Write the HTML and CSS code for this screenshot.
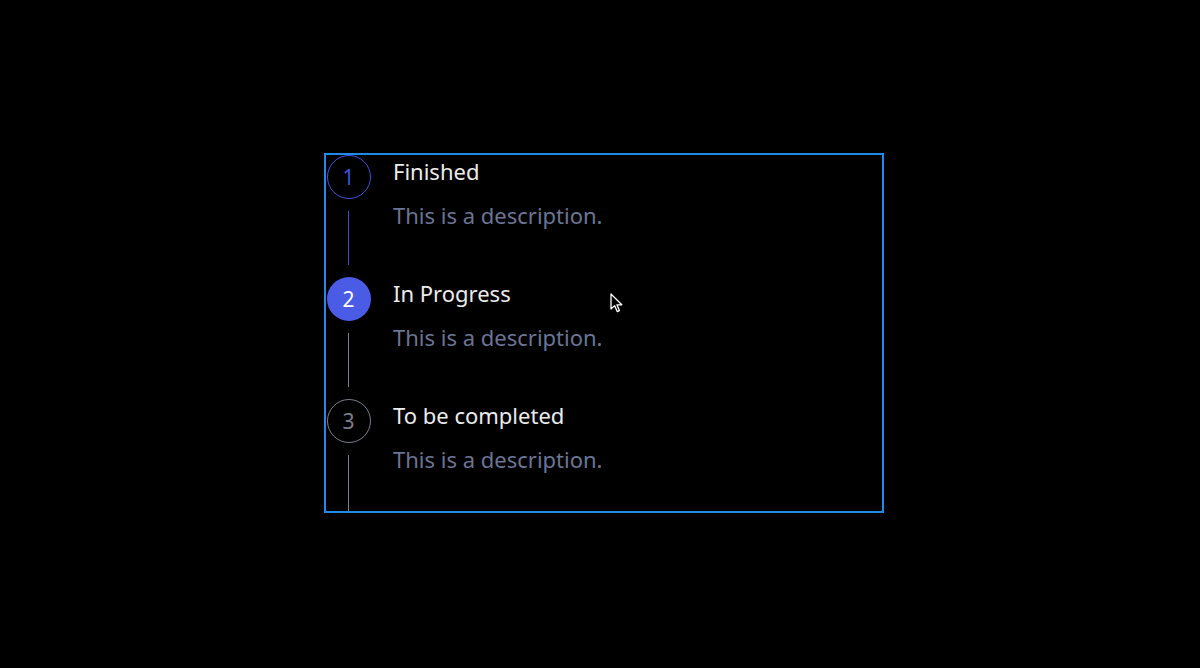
FILE: index.html
```html
<!DOCTYPE html>
<html>
<head>
<meta charset="utf-8">
<link rel="stylesheet" href="styles.css">
</head>
<body>
<div class="frame">
  <div class="step done">
    <div class="rail"><div class="dot">1</div><div class="tail"></div></div>
    <div class="body"><div class="title">Finished</div><div class="desc">This is a description.</div></div>
  </div>
  <div class="step active">
    <div class="rail"><div class="dot">2</div><div class="tail"></div></div>
    <div class="body"><div class="title">In Progress</div><div class="desc">This is a description.</div></div>
  </div>
  <div class="step todo">
    <div class="rail"><div class="dot">3</div><div class="tail"></div></div>
    <div class="body"><div class="title">To be completed</div><div class="desc">This is a description.</div></div>
  </div>
</div>
<svg class="cursor" width="14" height="22" viewBox="0 0 14 22"><path d="M1 1 L1 16 L4.6 12.6 L7.2 18.6 L9.4 17.6 L6.9 11.8 L11.8 11.8 Z" fill="#000" stroke="#fff" stroke-width="1.3" stroke-linejoin="round"/></svg>
</body>
</html>
```
FILE: styles.css
```css
html, body { margin: 0; height: 100%; }
body {
  background: #000;
  font-family: "Noto Sans", sans-serif;
  padding: 153px 0 0 324px;
  box-sizing: border-box;
}
.frame {
  width: 556px;
  height: 356px;
  border: 2px solid #1f8ae8;
  overflow: hidden;
}
.step { display: flex; height: 122px; }
.rail { width: 45px; display: flex; flex-direction: column; align-items: center; }
.dot {
  width: 44px; height: 44px; box-sizing: border-box;
  border-radius: 50%;
  display: flex; align-items: center; justify-content: center;
  font-size: 21px; font-weight: 400;
  flex: none;
}
.tail { width: 1.5px; height: 54px; margin-top: 12px; }
.todo .tail { height: 80px; }
.done .dot { border: 1.5px solid #3a55dc; color: #3a55dc; }
.done .tail { background: #3a52d4; }
.active .dot { background: #4a5ce6; color: #fff; }
.active .tail { background: #7a7f8c; }
.todo .dot { border: 1.5px solid #7a7f8c; color: #7a7f8c; }
.todo .tail { background: #7a7f8c; }
.body { padding-left: 22px; }
.title { color: #ececec; font-size: 22px; line-height: 30px; margin-top: 1px; }
.desc { color: #6b7595; font-size: 22px; line-height: 30px; margin-top: 14px; }
.cursor { position: absolute; left: 610px; top: 293px; }
```
